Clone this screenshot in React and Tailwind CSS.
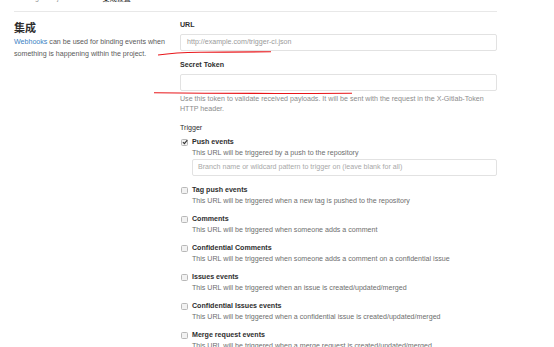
import React from 'react';

const events = [
  { title: 'Tag push events', desc: 'This URL will be triggered when a new tag is pushed to the repository' },
  { title: 'Comments', desc: 'This URL will be triggered when someone adds a comment' },
  { title: 'Confidential Comments', desc: 'This URL will be triggered when someone adds a comment on a confidential issue' },
  { title: 'Issues events', desc: 'This URL will be triggered when an issue is created/updated/merged' },
  { title: 'Confidential Issues events', desc: 'This URL will be triggered when a confidential issue is created/updated/merged' },
  { title: 'Merge request events', desc: 'This URL will be triggered when a merge request is created/updated/merged' },
];

const Checkbox = ({ checked }) => (
  <div className="w-[7px] h-[7px] mt-[2px] ml-[1px] shrink-0 rounded-[1.5px] border border-[#b8b8b8] bg-[#f2f2f2] flex items-center justify-center">
    {checked && (
      <svg width="6" height="6" viewBox="0 0 10 10" className="overflow-visible">
        <path d="M1.5 5.2 L4 7.8 L8.8 1.8" stroke="#333" strokeWidth="1.8" fill="none" />
      </svg>
    )}
  </div>
);

const EventRow = ({ title, desc, checked, children }) => (
  <div className="flex gap-[4px]">
    <Checkbox checked={checked} />
    <div className="flex-1">
      <div className="font-bold text-[#2e2e2e] leading-[11px]">{title}</div>
      <div className="text-[#6e6e6e] leading-[11px]">{desc}</div>
      {children}
    </div>
  </div>
);

export default function App() {
  return (
    <div className="relative w-[554px] h-[347px] overflow-hidden bg-white font-['Liberation_Sans',sans-serif] text-[7.1px] text-[#2e2e2e]">
      <div className="px-[14px]">
        <div className="w-[483px] h-[12px] border-b border-[#e8e8e8] overflow-hidden flex items-end">
          <div className="mb-[8px] flex gap-[4px] text-[#9a9a9a] leading-[10px]">
            <span>moonlight</span>
            <span>&gt;</span>
            <span>jenkinstest</span>
            <span>&gt;</span>
            <span className="text-[#333] font-['Noto_Sans_CJK_SC',sans-serif]">集成设置</span>
          </div>
        </div>

        <div className="flex">
          <div className="w-[166px] pt-[8px]">
            <h3 className="font-['Noto_Sans_CJK_SC',sans-serif] text-[11px] font-bold leading-[14px] text-[#2e2e2e]">集成</h3>
            <p className="mt-[3px] leading-[11.5px] text-[#5a5a5a]">
              <span className="text-[#3b7fc4]">Webhooks</span> can be used for binding events when something is happening within the project.
            </p>
          </div>

          <div className="w-[317px] pt-[8px]">
            <div className="font-bold leading-[10px]">URL</div>
            <div className="mt-[4px] h-[17px] rounded-[2px] border border-[#e2e2e2] px-[6px] flex items-center text-[#9a9a9a]">
              http://example.com/trigger-ci.json
            </div>

            <div className="mt-[9px] font-bold leading-[10px]">Secret Token</div>
            <div className="mt-[4px] h-[17px] rounded-[2px] border border-[#e2e2e2]"></div>
            <p className="mt-[3px] text-[#8c8c8c] leading-[10px]">
              Use this token to validate received payloads. It will be sent with the request in the X-Gitlab-Token
              <br />
              HTTP header.
            </p>

            <div className="mt-[9px] leading-[10px]">Trigger</div>

            <div className="mt-[3.5px] flex flex-col gap-[7px]">
              <EventRow title="Push events" desc="This URL will be triggered by a push to the repository" checked>
                <div className="mb-[2.5px] h-[17px] rounded-[2px] border border-[#e2e2e2] px-[5px] flex items-center text-[#a8a8a8]">
                  Branch name or wildcard pattern to trigger on (leave blank for all)
                </div>
              </EventRow>
              {events.map((e) => (
                <EventRow key={e.title} title={e.title} desc={e.desc} />
              ))}
            </div>
          </div>
        </div>
      </div>

      <svg className="absolute inset-0 pointer-events-none" width="554" height="347">
        <path d="M158 55 Q 175 52.5 200 52.2 T 271 51.8" stroke="#e8161a" strokeWidth="1.1" fill="none" />
        <path d="M154 92.8 Q 250 93.8 352 93.2" stroke="#e8161a" strokeWidth="1.1" fill="none" />
      </svg>
    </div>
  );
}
